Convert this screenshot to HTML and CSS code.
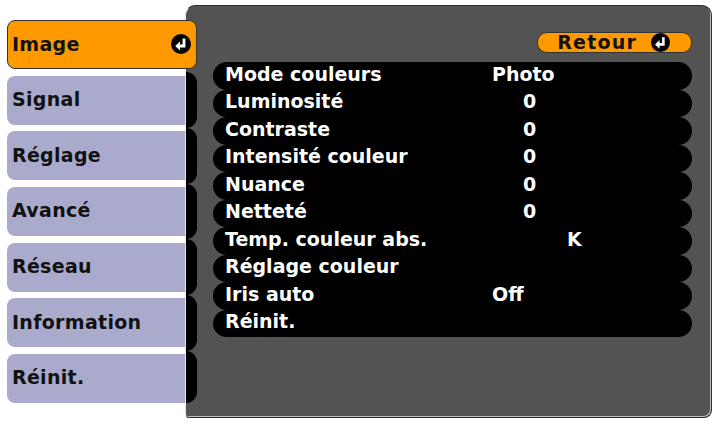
FILE: index.html
```html
<!DOCTYPE html>
<html lang="fr">
<head>
    <meta charset="UTF-8">
    <meta name="viewport" content="width=device-width, initial-scale=1.0">
    <title>Image</title>
    <link rel="stylesheet" href="styles.css">
</head>
<body>
    <div class="osd">
        <ul class="tabs">
            <li class="tab active">
                <span>Image</span>
                <svg class="enter" viewBox="0 0 20 20"><circle cx="10" cy="10" r="10" fill="#000"/><path d="M13 4.5v7.5h-5" fill="none" stroke="#fff" stroke-width="2.8"/><path d="M9 7.4L4.2 12 9 16.6z" fill="#fff"/></svg>
            </li>
            <li class="tab">Signal</li>
            <li class="tab">Réglage</li>
            <li class="tab">Avancé</li>
            <li class="tab">Réseau</li>
            <li class="tab">Information</li>
            <li class="tab">Réinit.</li>
        </ul>
        <div class="panel">
            <div class="caps">
                <div class="cap"></div>
                <div class="cap"></div>
                <div class="cap"></div>
                <div class="cap"></div>
                <div class="cap"></div>
                <div class="cap last"></div>
            </div>
            <div class="main">
                <div class="head">
                    <button class="retour">
                        <span>Retour</span>
                        <svg class="enter" viewBox="0 0 20 20"><circle cx="10" cy="10" r="10" fill="#000"/><path d="M13 4.5v7.5h-5" fill="none" stroke="#fff" stroke-width="2.8"/><path d="M9 7.4L4.2 12 9 16.6z" fill="#fff"/></svg>
                    </button>
                </div>
                <ul class="rows">
                    <li class="row"><span class="label">Mode couleurs</span><span class="val">Photo</span></li>
                    <li class="row"><span class="label">Luminosité</span><span class="val num">0</span></li>
                    <li class="row"><span class="label">Contraste</span><span class="val num">0</span></li>
                    <li class="row"><span class="label">Intensité couleur</span><span class="val num">0</span></li>
                    <li class="row"><span class="label">Nuance</span><span class="val num">0</span></li>
                    <li class="row"><span class="label">Netteté</span><span class="val num">0</span></li>
                    <li class="row"><span class="label">Temp. couleur abs.</span><span class="val unit">K</span></li>
                    <li class="row"><span class="label">Réglage couleur</span></li>
                    <li class="row"><span class="label">Iris auto</span><span class="val">Off</span></li>
                    <li class="row"><span class="label">Réinit.</span></li>
                </ul>
            </div>
        </div>
    </div>
</body>
</html>
```

FILE: styles.css
```css
body{
    margin: 0;
    background: #fff;
    font-family: "DejaVu Sans", "Liberation Sans", sans-serif;
    font-weight: bold;
    font-size: 19px;
}
ul{
    margin: 0;
    padding: 0;
    list-style: none;
}
.osd{
    display: flex;
    align-items: flex-start;
    padding: 5px 0 0 7px;
}
.tabs{
    display: flex;
    flex-direction: column;
    gap: 6.67px;
    width: 178px;
    margin-top: 15px;
}
.tab{
    height: 49px;
    box-sizing: border-box;
    display: flex;
    align-items: center;
    justify-content: space-between;
    padding: 0 0 2px 5px;
    background: #aaaacc;
    color: #111;
    letter-spacing: 0.3px;
    border-radius: 8px 0 0 8px;
}
.tab.active{
    width: 190px;
    position: relative;
    z-index: 1;
    background: #ff9900;
    border: 1px solid #333;
    border-radius: 8px;
    padding: 0 5px 2px 4px;
}
.enter{
    width: 20px;
    height: 20px;
    flex: none;
}
.panel{
    flex: none;
    display: flex;
    width: 527px;
    height: 413px;
    box-sizing: border-box;
    background: #535353;
    border: 1px solid #2e2e2e;
    border-left-color: #e8e8e8;
    border-radius: 10px 10px 8px 4px;
    box-shadow: inset -1px -1px 0 #bdbdbd;
}
.caps{
    width: 11px;
    padding-top: 66.3px;
}
.cap{
    height: 55.67px;
    background: #000;
    border-radius: 0 12px 12px 0;
}
.cap.last{
    height: 52.3px;
}
.main{
    flex: 1;
    margin: 0 19px 0 16px;
    padding-top: 26px;
}
.head{
    display: flex;
    justify-content: flex-end;
    margin-bottom: 9px;
}
.retour{
    width: 155px;
    height: 21px;
    box-sizing: border-box;
    display: flex;
    align-items: center;
    justify-content: flex-end;
    gap: 14px;
    padding: 0 21px 1px 0;
    background: #ff9900;
    border: 1px solid #333;
    border-radius: 10px;
    font: inherit;
    letter-spacing: 1.2px;
    color: #111;
}
.retour .enter{
    width: 19px;
    height: 19px;
}
.row{
    height: 27.5px;
    box-sizing: border-box;
    display: flex;
    align-items: center;
    padding: 0 0 4px 12px;
    background: #000;
    color: #fff;
    border-radius: 14px;
}
.label{
    width: 267px;
    flex: none;
    white-space: nowrap;
}
.val.num{
    padding-left: 31px;
}
.val.unit{
    padding-left: 75px;
}
```
